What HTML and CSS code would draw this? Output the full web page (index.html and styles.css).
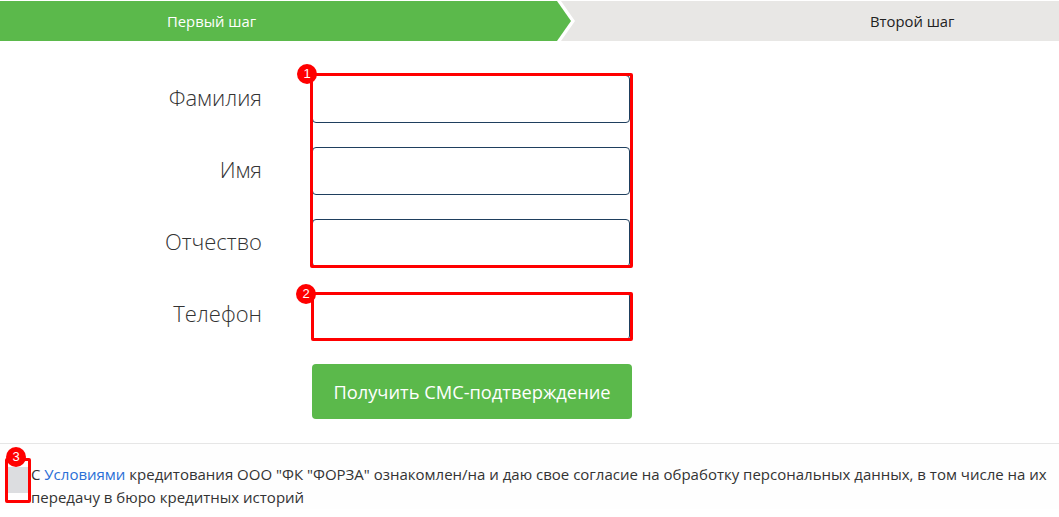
FILE: index.html
```html
<!DOCTYPE html>
<html lang="ru">
<head>
<meta charset="utf-8">
<title>Первый шаг</title>
<link rel="stylesheet" href="styles.css">
</head>
<body>
<div class="steps">
  <div class="step step-active">Первый шаг</div>
  <div class="step step-next">Второй шаг</div>
</div>

<form class="form">
  <div class="group">
    <div class="row">
      <label class="label">Фамилия</label>
      <input class="input" type="text">
    </div>
    <div class="row">
      <label class="label">Имя</label>
      <input class="input" type="text">
    </div>
    <div class="row">
      <label class="label">Отчество</label>
      <input class="input" type="text">
    </div>
    <div class="mark mark-group"></div>
    <span class="badge badge-1">1</span>
  </div>

  <div class="group group-phone">
    <div class="row">
      <label class="label label-phone">Телефон</label>
      <input class="input" type="text">
    </div>
    <div class="mark mark-phone"></div>
    <span class="badge badge-2">2</span>
  </div>

  <div class="row row-button">
    <span class="label"></span>
    <button class="button" type="button">Получить СМС-подтверждение</button>
  </div>
</form>

<div class="agree">
  <div class="check-wrap">
    <span class="check"></span>
    <div class="mark mark-check"></div>
    <span class="badge badge-3">3</span>
  </div>
  <p class="agree-text">С <a class="link" href="#">Условиями</a> кредитования ООО "ФК "ФОРЗА" ознакомлен/на и даю свое согласие на обработку персональных данных, в том числе на их передачу в бюро кредитных историй</p>
</div>
</body>
</html>
```

FILE: styles.css
```css
* { box-sizing: border-box; }

body {
  margin: 0;
  background: #ffffff;
  font-family: "Open Sans", "Noto Sans", sans-serif;
  color: #333333;
}

.steps {
  display: flex;
  height: 40px;
  margin-top: 1px;
}

.step {
  height: 40px;
  line-height: 40px;
  font-size: 14.8px;
}

.step-active {
  width: 571px;
  flex: none;
  background: #5bb94b;
  color: #ffffff;
  padding-left: 167px;
  clip-path: polygon(0 0, 557px 0, 571px 50%, 557px 100%, 0 100%);
  position: relative;
  z-index: 1;
}

.step-next {
  flex: 1;
  margin-left: -10px;
  background: #e8e7e5;
  color: #222222;
  padding-left: 309px;
  clip-path: polygon(0 0, 100% 0, 100% 100%, 0 100%, 14px 50%);
}

.form {
  padding-top: 34px;
}

.group {
  position: relative;
  width: 640px;
}

.row {
  display: flex;
  align-items: center;
  margin-bottom: 24px;
}

.group .row:last-of-type {
  margin-bottom: 0;
}

.group-phone {
  margin-top: 25px;
}

.row-button {
  margin-top: 23px;
  margin-bottom: 0;
}

.label {
  width: 262px;
  flex: none;
  text-align: right;
  font-size: 22px;
  font-weight: 300;
  color: #333333;
  margin-right: 50px;
  padding-bottom: 4px;
}

.label-phone {
  padding-bottom: 6px;
}

.input {
  width: 318px;
  height: 48px;
  border: 1px solid #1f3f5e;
  border-radius: 4px;
  background: #ffffff;
  font: inherit;
  padding: 0 10px;
}

.button {
  width: 320px;
  height: 55px;
  border: none;
  border-radius: 4px;
  background: #5bb94b;
  color: #ffffff;
  font-family: "Open Sans", "Noto Sans", sans-serif;
  font-size: 18.3px;
}

.mark {
  position: absolute;
  border: 3px solid #ff0000;
  border-radius: 2px;
  pointer-events: none;
}

.mark-group {
  left: 310px;
  top: -2px;
  width: 323px;
  height: 195px;
}

.mark-phone {
  left: 311px;
  top: 0;
  width: 322px;
  height: 49px;
}

.badge {
  position: absolute;
  width: 20px;
  height: 20px;
  border-radius: 50%;
  background: #ff0000;
  color: #ffffff;
  font-family: "Liberation Sans", Arial, sans-serif;
  font-size: 13px;
  line-height: 20px;
  text-align: center;
}

.badge-1 { left: 297px; top: -11px; }
.badge-2 { left: 296px; top: -8px; }

.agree {
  margin-top: 24px;
  border-top: 1px solid #e6e6e6;
  display: flex;
  align-items: flex-start;
  padding-top: 19px;
  background: #fefefe;
}

.check-wrap {
  position: relative;
  width: 31px;
  flex: none;
  height: 40px;
}

.check {
  position: absolute;
  left: 8px;
  top: 4px;
  width: 20px;
  height: 26px;
  background: #dcdde0;
}

.mark-check {
  left: 5px;
  top: -5px;
  width: 26px;
  height: 45px;
}

.badge-3 { left: 6px; top: -16px; }

.agree-text {
  margin: 0;
  padding-right: 2px;
  font-family: "Open Sans", "Noto Sans", sans-serif;
  font-size: 15px;
  line-height: 23px;
  color: #333333;
}

.link {
  color: #2a6fd6;
  text-decoration: none;
}
```
